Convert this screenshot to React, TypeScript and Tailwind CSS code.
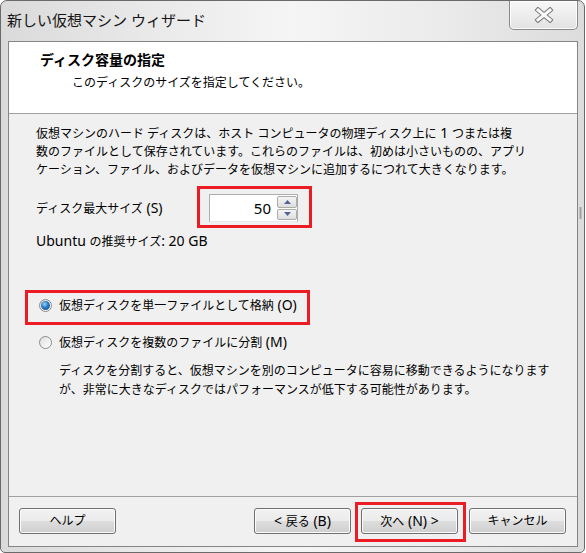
import React from "react";

function L({ children, className = "" }: { children: React.ReactNode; className?: string }) {
  return <span className={"text-[14px] " + className}>{children}</span>;
}

function WinButton({ children, className = "" }: { children: React.ReactNode; className?: string }) {
  return (
    <div
      className={
        "w-[97px] h-[26px] rounded-[3px] border border-[#707070] bg-[linear-gradient(180deg,#f2f2f2_0%,#ebebeb_48%,#dddddd_52%,#cfcfcf_100%)] shadow-[inset_0_0_0_1px_#fbfbfb] flex items-center justify-center text-[12px] leading-[16px] text-black whitespace-nowrap " +
        className
      }
    >
      <span>{children}</span>
    </div>
  );
}

function Radio({ checked }: { checked?: boolean }) {
  return (
    <div className="w-[13px] h-[13px] rounded-full border border-[#8b8c8c] bg-[linear-gradient(135deg,#d9d9d9_0%,#f4f4f4_60%,#ffffff_100%)] flex items-center justify-center shrink-0">
      <div className="w-[9px] h-[9px] rounded-full bg-[linear-gradient(135deg,#e2e2e2,#fbfbfb)] flex items-center justify-center">
        {checked && (
          <div className="w-[9px] h-[9px] rounded-full bg-[radial-gradient(circle_at_40%_35%,#9fd8ff_0%,#2f7fc8_40%,#0a3a72_100%)]" />
        )}
      </div>
    </div>
  );
}

export default function App() {
  return (
    <div className="w-[586px] h-[553px] bg-white font-['Noto_Sans','Noto_Sans_CJK_JP',sans-serif] text-black overflow-hidden">
      <div className="relative w-[585px] h-[553px] flex flex-col border border-[#6a6a6a] rounded-t-[7px] rounded-b-[5px] bg-[linear-gradient(90deg,#dadada_0%,#e9e9e9_25%,#f5f5f5_50%,#ebebeb_75%,#dcdcdc_100%)]">
        {/* title bar */}
        <div className="h-[40px] shrink-0 flex items-start justify-between pl-[6px] pr-[6px]">
          <div className="mt-[9px] text-[15px] leading-[20px] text-[#151515] whitespace-nowrap">
            新しい仮想マシン ウィザード
          </div>
          <div className="w-[69px] h-[29px] border border-t-0 border-[#8a8a8a] rounded-b-[5px] bg-[linear-gradient(180deg,#f7f7f7_0%,#ededed_50%,#e2e2e2_100%)] shadow-[inset_0_0_0_1px_rgba(255,255,255,0.85)] flex items-center justify-center">
            <svg width="20" height="16" viewBox="0 0 20 16">
              <line x1="4" y1="3" x2="16" y2="13" stroke="#7b7b7b" strokeWidth="5" strokeLinecap="square" />
              <line x1="16" y1="3" x2="4" y2="13" stroke="#7b7b7b" strokeWidth="5" strokeLinecap="square" />
              <line x1="4" y1="3" x2="16" y2="13" stroke="#fbfbfb" strokeWidth="3" strokeLinecap="square" />
              <line x1="16" y1="3" x2="4" y2="13" stroke="#fbfbfb" strokeWidth="3" strokeLinecap="square" />
            </svg>
          </div>
        </div>

        {/* resize grip mark on the frame */}
        <div className="absolute left-[578px] top-[206px] w-[3px] h-[12px] rounded-[1px] bg-[linear-gradient(90deg,#cfcfcf,#9f9f9f,#cfcfcf)]" />

        {/* client area */}
        <div className="flex-1 ml-[7px] mr-[6px] mb-[5px] flex flex-col border border-[#858585] bg-[#f0f0f0]">
          {/* header */}
          <div className="h-[72px] shrink-0 bg-white border-b border-[#a0a0a0] pt-[9px] pl-[31px]">
            <div className="text-[14px] font-bold leading-[18px] whitespace-nowrap">ディスク容量の指定</div>
            <div className="mt-[5px] ml-[32px] text-[12px] leading-[18px] whitespace-nowrap">
              このディスクのサイズを指定してください。
            </div>
          </div>

          {/* body */}
          <div className="flex-1 pl-[27px] pt-[10px] text-[12px]">
            <div className="leading-[18px] whitespace-nowrap">
              仮想マシンのハード ディスクは、ホスト コンピュータの物理ディスク上に<L> 1 </L>つまたは複
              <br />
              数のファイルとして保存されています。これらのファイルは、初めは小さいものの、アプリ
              <br />
              ケーション、ファイル、およびデータを仮想マシンに追加するにつれて大きくなります。
            </div>

            <div className="mt-[15px] h-[28px] flex items-center">
              <div className="w-[173px] leading-[18px] whitespace-nowrap">
                ディスク最大サイズ<L> (S)</L>
              </div>
              <div className="relative w-[89px] h-[28px] flex">
                <div className="flex-1 h-full bg-white border border-[#abadb3] border-r-0 border-b-[#e3e9ef] flex items-center justify-end pr-[6px] text-[15px] leading-[18px]">
                  50
                </div>
                <div className="w-[21px] h-full flex flex-col gap-px py-px bg-white border border-[#abadb3] border-l-0 border-b-[#e3e9ef]">
                  <div className="flex-1 border border-[#acacac] rounded-[2px] bg-[linear-gradient(180deg,#f5f5f5,#dedede)] flex items-center justify-center">
                    <svg width="7" height="4" viewBox="0 0 7 4">
                      <polygon points="3.5,0 7,4 0,4" fill="#4f6696" />
                    </svg>
                  </div>
                  <div className="flex-1 border border-[#acacac] rounded-[2px] bg-[linear-gradient(180deg,#f5f5f5,#dedede)] flex items-center justify-center">
                    <svg width="7" height="4" viewBox="0 0 7 4">
                      <polygon points="0,0 7,0 3.5,4" fill="#4f6696" />
                    </svg>
                  </div>
                </div>
                <div className="absolute left-[-12px] top-[-8px] w-[115px] h-[42px] border-[3px] border-[#ec1c24]" />
              </div>
            </div>

            <div className="mt-[10px] leading-[18px] whitespace-nowrap">
              <L>Ubuntu </L>の推奨サイズ<L>: 20 GB</L>
            </div>

            <div className="relative mt-[45px] ml-[3px] h-[18px] flex items-center gap-[7px]">
              <Radio checked />
              <div className="leading-[18px] whitespace-nowrap">
                仮想ディスクを単一ファイルとして格納<L> (O)</L>
              </div>
              <div className="absolute left-[-14px] top-[-6px] w-[285px] h-[35px] border-[3px] border-[#ec1c24]" />
            </div>

            <div className="mt-[19px] ml-[3px] h-[18px] flex items-center gap-[7px]">
              <Radio />
              <div className="leading-[18px] whitespace-nowrap">
                仮想ディスクを複数のファイルに分割<L> (M)</L>
              </div>
            </div>

            <div className="mt-[10px] ml-[23px] leading-[19px] whitespace-nowrap">
              ディスクを分割すると、仮想マシンを別のコンピュータに容易に移動できるようになります
              <br />
              が、非常に大きなディスクではパフォーマンスが低下する可能性があります。
            </div>
          </div>

          {/* footer */}
          <div className="h-[50px] shrink-0 border-t border-[#a0a0a0] pt-[11px] pl-[10px] pr-[11px] flex items-start">
            <WinButton>ヘルプ</WinButton>
            <div className="ml-auto flex items-start">
              <WinButton>
                <L className="text-[13px]">&lt; </L>戻る<L className="text-[13px]"> (B)</L>
              </WinButton>
              <div className="relative ml-[10px]">
                <WinButton>
                  次へ<L className="text-[13px]"> (N) &gt;</L>
                </WinButton>
                <div className="absolute left-[-6px] top-[-6px] w-[111px] h-[40px] border-[3px] border-[#ec1c24]" />
              </div>
              <WinButton className="ml-[11px]">キャンセル</WinButton>
            </div>
          </div>
        </div>
      </div>
    </div>
  );
}
